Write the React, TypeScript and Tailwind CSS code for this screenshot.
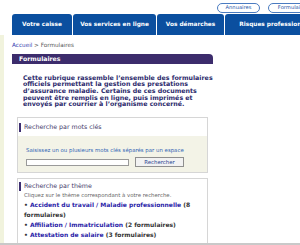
const TABS = [
  { label: 'Votre caisse', w: 'w-[60px]' },
  { label: 'Vos services en ligne', w: 'w-[83px]' },
  { label: 'Vos démarches', w: 'w-[67px]' },
  { label: 'Risques professionnels', w: 'w-[104px]' },
];

const THEMES = [
  { label: 'Accident du travail / Maladie professionnelle', count: '(8 formulaires)' },
  { label: 'Affiliation / Immatriculation', count: '(2 formulaires)' },
  { label: 'Attestation de salaire', count: '(3 formulaires)' },
];

function BoxTitle({ children }: { children: React.ReactNode }) {
  return (
    <div className="h-[10px] flex items-center gap-[3px]">
      <span className="w-[2px] h-[9px] bg-[#3e2f72]" />
      <span className="text-[6.3px] text-[#3f3a6a]">{children}</span>
    </div>
  );
}

export default function App() {
  return (
    <div
      className="relative w-[300px] h-[245px] overflow-hidden bg-white"
      style={{ fontFamily: '"DejaVu Sans", Verdana, sans-serif' }}
    >
      {/* Top links */}
      <div className="h-[14px] pl-[217px] pt-[3px] flex gap-[8px] w-[360px]">
        <span className="h-[10px] w-[43px] rounded-[5px] border border-[#4a7bc0] text-[5.2px] text-[#1f56a8] flex items-center justify-center">
          Annuaires
        </span>
        <span className="h-[10px] w-[50px] rounded-[5px] border border-[#4a7bc0] text-[5.2px] text-[#1f56a8] flex items-center justify-center">
          Formulaires
        </span>
      </div>

      {/* Tabs */}
      <div className="flex pl-[12px] gap-px w-[360px]">
        {TABS.map((t) => (
          <div
            key={t.label}
            className={`${t.w} h-[21px] shrink-0 rounded-t-[3px] bg-[#0b4f9f] text-white font-bold text-[5.8px] flex items-center justify-center`}
          >
            {t.label}
          </div>
        ))}
      </div>

      <div className="flex">
        {/* Left strip */}
        <div className="w-[4px] h-[210px] bg-[#f1f3dd] shrink-0" />

        <div className="pl-[8px] w-[209px]">
          {/* Breadcrumb */}
          <p className="mt-[6px] h-[8px] leading-[8px] text-[5.7px] text-[#555]">
            <span className="text-[#3340b0]">Accueil</span> &gt; Formulaires
          </p>

          {/* Purple heading */}
          <div className="mt-[5px] h-[10px] rounded-tr-[4px] bg-[#3c2c6c] pl-[7px] flex items-center text-white font-bold text-[6.2px]">
            Formulaires
          </div>

          <p className="mt-[10.5px] pl-[11px] text-[6.3px] leading-[6.7px] font-bold text-[#2c2a6c] whitespace-nowrap">
            Cette rubrique rassemble l’ensemble des formulaires
            <br />
            officiels permettant la gestion des prestations
            <br />
            d’assurance maladie. Certains de ces documents
            <br />
            peuvent être remplis en ligne, puis imprimés et
            <br />
            envoyés par courrier à l’organisme concerné.
          </p>

          {/* Keyword search */}
          <div className="mt-[9px] ml-[5px] w-[191px] border border-[#d6d6d6]">
            <div className="h-[18px] pl-[1px] pt-[4px] bg-white">
              <BoxTitle>Recherche par mots clés</BoxTitle>
            </div>
            <div className="h-[36px] bg-[#f3f3e7] pl-[8px] pt-[10px]">
              <p className="h-[8px] leading-[8px] text-[5.4px] text-[#2f63b4] whitespace-nowrap">
                Saisissez un ou plusieurs mots clés séparés par un espace
              </p>
              <div className="mt-[3px] flex items-center gap-[6px]">
                <div className="w-[103px] h-[7px] bg-white border border-[#9a9a9a]" />
                <div className="w-[49px] h-[10px] bg-[#f2f2f2] border border-[#8f8f8f] text-[5.4px] text-[#1f3f8f] flex items-center justify-center">
                  Rechercher
                </div>
              </div>
            </div>
          </div>

          {/* Theme search */}
          <div className="mt-[5px] ml-[5px] w-[191px] h-[80px] border border-[#d6d6d6] pl-[1px] pt-[2px]">
            <BoxTitle>Recherche par thème</BoxTitle>
            <p className="h-[8px] leading-[8px] pl-[5px] text-[5.4px] text-[#666] whitespace-nowrap">
              Cliquez sur le thème correspondant à votre recherche.
            </p>
            <ul className="mt-[1px] pl-[5px] pr-[4px] text-[6px] leading-[10px] font-bold">
              {THEMES.map((t) => (
                <li key={t.label}>
                  <span className="text-[#333]">•</span>{' '}
                  <span className="text-[#2a24a8]">{t.label}</span>{' '}
                  <span className="text-[#333]">{t.count}</span>
                </li>
              ))}
            </ul>
          </div>
        </div>
      </div>

      {/* Bottom rule */}
      <div className="absolute left-0 right-0 bottom-0 h-[2px] bg-[#c9c9c9]" />
    </div>
  );
}
